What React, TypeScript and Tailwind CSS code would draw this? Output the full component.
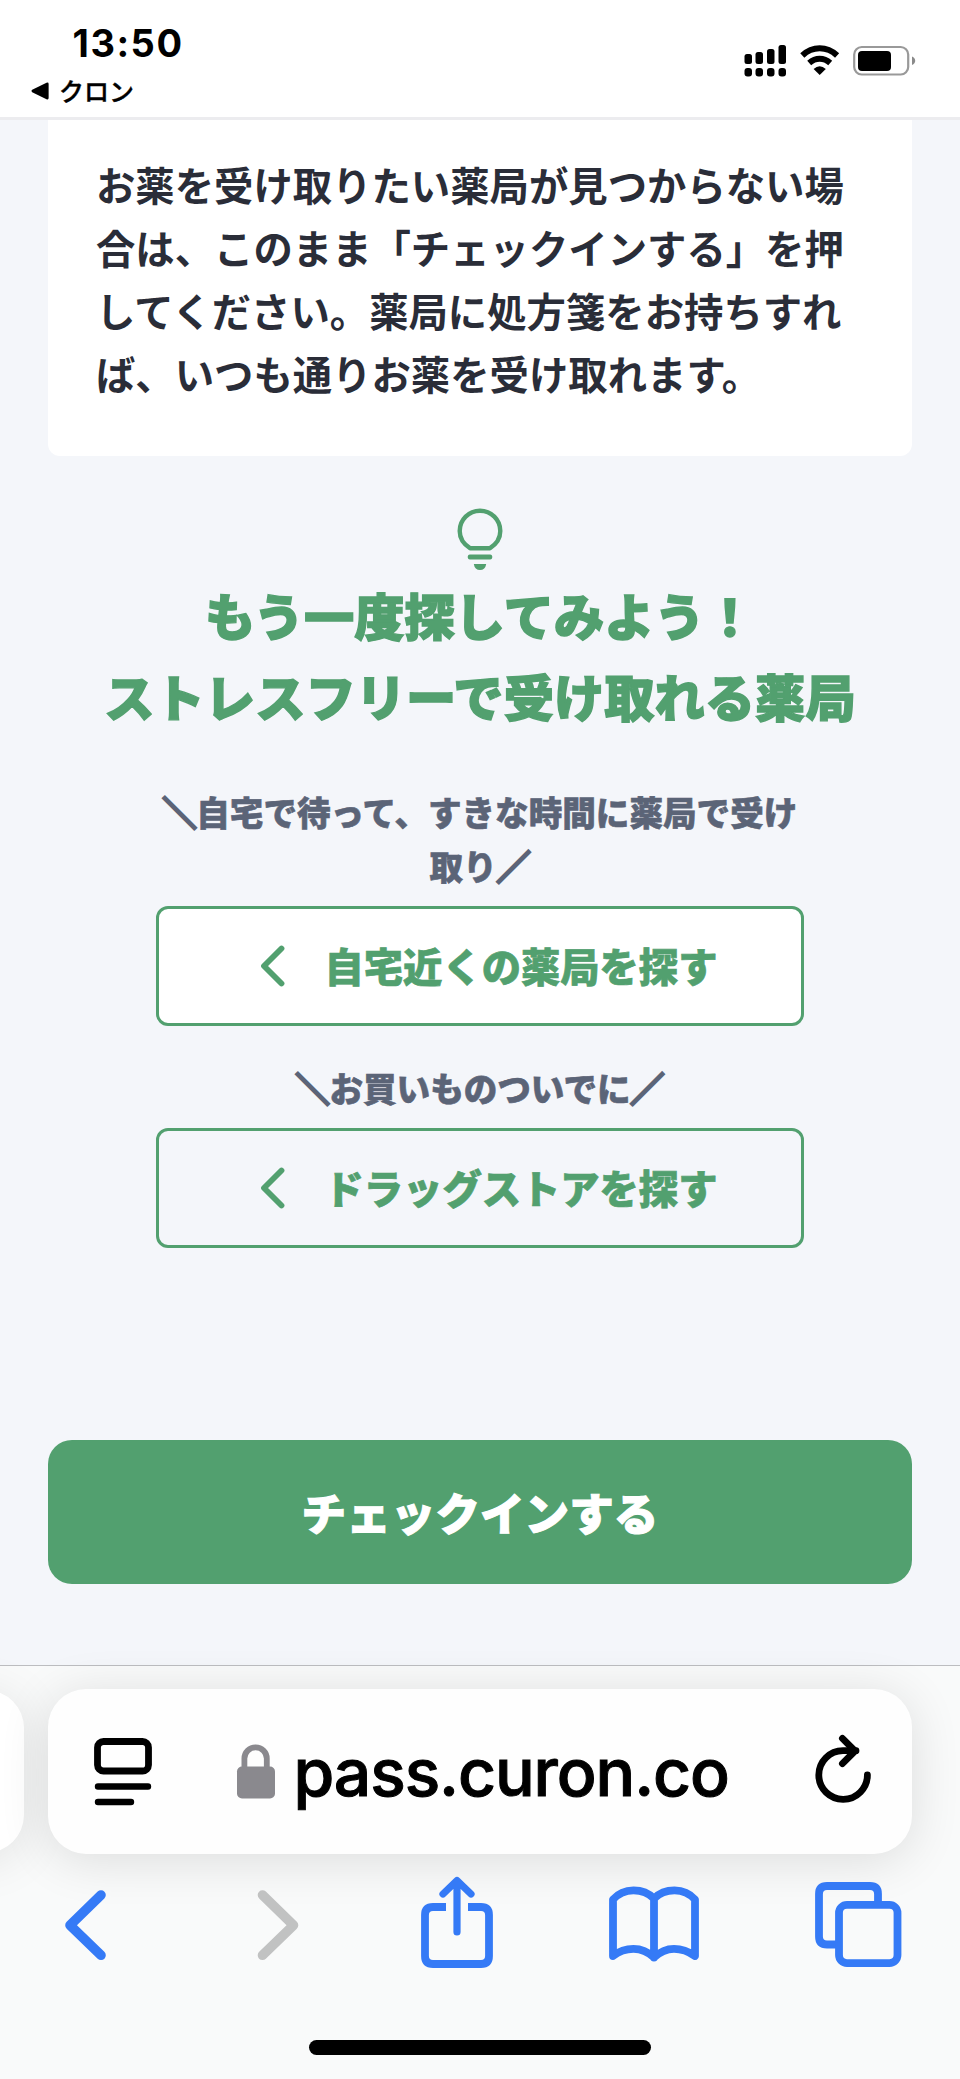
import type { ReactNode } from 'react';

const noticeLines = [
    'お薬を受け取りたい薬局が見つからない場',
    '合は、このまま「チェックインする」を押',
    'してください。薬局に処方箋をお持ちすれ',
    'ば、いつも通りお薬を受け取れます。',
];

const searchOptions = [
    {
        label: '自宅近くの薬局を探す',
        caption: ['自宅で待って、すきな時間に薬局で受け', '取り'],
        buttonClass: 'bg-white',
        captionClass: 'mb-[13px]',
    },
    {
        label: 'ドラッグストアを探す',
        caption: ['お買いものついでに'],
        buttonClass: 'bg-transparent',
        captionClass: 'mt-[35px] mb-[13px]',
    },
];

function StatusBar() {
    return (
        <header className="h-[120px] shrink-0 bg-white border-b-[3px] border-[#ececef] flex justify-between">
            <div className="pl-[31px] pt-[22px]">
                <div className="pl-[41.5px] h-[43px] leading-[43px] text-[38px] font-bold text-black font-['Inter',sans-serif] tracking-[1.5px]">
                    13:50
                </div>
                <div className="flex items-center h-[52px] gap-[10px]">
                    <svg width="18" height="18" viewBox="0 0 18 18">
                        <path d="M1.2 7.8 15.5.8Q17.6 0 17.6 2v14q0 2-2.1 1.2L1.2 10.2Q-.2 9 1.2 7.8Z" />
                    </svg>
                    <span className="text-[25px] font-medium text-black [-webkit-text-stroke:0.4px]">クロン</span>
                </div>
            </div>

            <div className="pt-[44px] pr-[43px] flex gap-[13px]">
                {/* Dual SIM signal */}
                <svg width="43" height="34" viewBox="0 0 43 34">
                    <rect x="0.5" y="10" width="7.5" height="10" rx="2.5" />
                    <rect x="11.5" y="8" width="7.5" height="12" rx="2.5" />
                    <rect x="23" y="5" width="7.5" height="15" rx="2.5" />
                    <rect x="34.5" y="1" width="7.5" height="19" rx="2.5" />
                    <rect x="0.5" y="24" width="7.5" height="8.5" rx="3" />
                    <rect x="11.5" y="24" width="7.5" height="8.5" rx="3" />
                    <rect x="23" y="24" width="7.5" height="8.5" rx="3" />
                    <rect x="34.5" y="24" width="7.5" height="8.5" rx="3" />
                </svg>
                {/* Wi-Fi */}
                <svg width="40" height="32" viewBox="0 0 40 32">
                    <path d="M2.300 11.500Q10 4.300 19.700 4.300T37.100 11.500" fill="none" stroke="#000" strokeWidth="6" />
                    <path d="M9.200 19Q14 14.800 19.700 14.800T30.200 19" fill="none" stroke="#000" strokeWidth="6" />
                    <path d="M13.600 25Q19.700 19.500 25.800 25L19.700 31Z" />
                </svg>
                {/* Battery */}
                <svg width="64" height="32" viewBox="0 0 64 32">
                    <rect x="1.2" y="3" width="54" height="27.5" rx="7.5" fill="none" stroke="#999" strokeWidth="2.2" />
                    <rect x="5" y="7" width="33" height="20" rx="4" />
                    <path d="M59 12.5q3.2 1.5 3.2 4.3T59 21Z" fill="#8a8a8a" />
                </svg>
            </div>
        </header>
    );
}

function BulbIcon() {
    return (
        <svg width="48" height="64" viewBox="0 0 48 64" className="text-[#52a06f]">
            <path
                d="M14 40.2C7.5 36 3.7 30.2 3.7 23a20.3 20.3 0 0 1 40.6 0c0 7.2-3.8 13-10.3 17.2Z"
                fill="none"
                stroke="currentColor"
                strokeWidth="4.4"
                strokeLinejoin="round"
            />
            <rect x="11.8" y="46.5" width="24.4" height="5" rx="2" fill="currentColor" />
            <path d="M17.8 56h12.4q-1 6-6.2 6t-6.2-6Z" fill="currentColor" />
        </svg>
    );
}

function Slash({ children }: { children: ReactNode }) {
    return <span className="[-webkit-text-stroke:3px]">{children}</span>;
}

function SearchButton({ children, className }: { children: ReactNode; className: string }) {
    return (
        <button
            className={`flex items-center w-[648px] h-[120px] pl-[101px] rounded-[12px] border-[3px] border-[#52a06f] text-[39.3px] font-black text-[#52a06f] ${className}`}
        >
            <svg width="26" height="42" viewBox="0 0 26 42" className="mr-[38.5px]">
                <path d="M21.5 3.5 4 21l17.500 17.5" fill="none" stroke="currentColor" strokeWidth="5.8" strokeLinecap="round" strokeLinejoin="round" />
            </svg>
            <span className="whitespace-nowrap -mt-[2px] [-webkit-text-stroke:0.7px]">{children}</span>
        </button>
    );
}

function AddressBar() {
    return (
        <div className="flex h-[165px] mt-[23px]">
            {/* Edge of the previous tab */}
            <div className="w-[100px] -ml-[76px] mr-6 my-px shrink-0 bg-white rounded-[38px] shadow-[0_6px_50px_rgba(0,0,0,0.10)]" />
            <div className="w-[864px] shrink-0 bg-[#fefefe] rounded-[38px] shadow-[0_6px_50px_rgba(0,0,0,0.12)] flex items-center pl-[45px] pr-[38.5px]">
                <svg width="60" height="70" viewBox="0 0 60 70" fill="none" stroke="#000" strokeLinecap="round">
                    <rect x="4.5" y="4.5" width="51" height="29.5" rx="6" strokeWidth="6.8" />
                    <path d="M5 49.500h50M5 65h33" strokeWidth="6.4" />
                </svg>
                <svg width="40" height="56" viewBox="0 0 40 56" className="ml-[83px] -mt-[2px]">
                    <path d="M8.4 25V15.5a11.2 11.2 0 0 1 22.4 0V25" fill="none" stroke="#8a898e" strokeWidth="5.8" />
                    <rect x="1" y="23.5" width="38" height="32" rx="5" fill="#8a898e" />
                </svg>
                <span className="ml-[17.5px] text-[66px] leading-[80px] font-medium text-black font-['Inter',sans-serif] tracking-[-1.1px] [-webkit-text-stroke:1px]">
                    pass.curon.co
                </span>
                <svg width="62" height="74" viewBox="0 0 62 74" fill="none" stroke="#000" strokeLinecap="round" strokeLinejoin="round" className="ml-auto -mt-[9px]" strokeWidth="6.8">
                    <path d="M55.4 44.8A24.3 24.3 0 1 1 31 20.7h13" />
                    <path d="M30.4 8.3 43 21 30.4 33.7" />
                </svg>
            </div>
        </div>
    );
}

function Toolbar() {
    return (
        <nav className="flex items-start pl-[63px] pt-[20px] h-[186px] text-[#357af6]">
            <svg width="44" height="74" viewBox="0 0 44 74" className="mt-[14px] mr-[149px]" fill="none" stroke="currentColor" strokeWidth="9.6" strokeLinecap="round" strokeLinejoin="round">
                <path d="M38 7 7 37.2 38 67.3" />
            </svg>
            <svg width="44" height="74" viewBox="0 0 44 74" className="mt-[14px] mr-[119px] text-[#c1c2c2]" fill="none" stroke="currentColor" strokeWidth="9.6" strokeLinecap="round" strokeLinejoin="round">
                <path d="M6.5 7 37.5 37.2 6.5 67.3" />
            </svg>
            <svg width="76" height="96" viewBox="0 0 76 96" className="mr-[112px]" fill="none" stroke="currentColor" strokeWidth="7.8">
                <path d="M27 33H14q-8 0-8 8V82q0 8 8 8H62q8 0 8-8V41q0-8-8-8H49" />
                <path d="M38 58V7M24 20 38 6.500l14 13.500" strokeWidth="7.2" strokeLinecap="round" strokeLinejoin="round" />
            </svg>
            <svg width="94" height="82" viewBox="0 0 94 82" className="mt-[9px] mr-[112px]" fill="none" stroke="currentColor" strokeWidth="7.8" strokeLinecap="round" strokeLinejoin="round">
                <path d="M47 15.5Q39 7.3 26.5 7.3T6 16.5V73Q15 65.8 26.5 65.8T47 74.5Q56 65.8 67 65.8T88 73V16.5Q80 7.3 67.5 7.3T47 15.5V74.5" />
            </svg>
            <svg width="92" height="92" viewBox="0 0 92 92" className="mt-[4px]" fill="none" stroke="currentColor" strokeWidth="7.8">
                <path d="M65 26V16q0-8-8-8H14q-8 0-8 8V58.5q0 8 8 8H26" />
                <rect x="26" y="26.8" width="58.5" height="58.3" rx="8" />
            </svg>
        </nav>
    );
}

export default function App() {
    return (
        <div className="w-[960px] h-[2079px] overflow-hidden flex flex-col bg-[#f4f6fa] font-['Noto_Sans_CJK_JP',sans-serif]">
            <StatusBar />

            <main className="h-[1545px] shrink-0 flex flex-col items-center">
                <p className="w-[864px] h-[336px] shrink-0 pt-[32px] pl-12 bg-white rounded-b-[12px] text-[39.36px] leading-[63px] font-bold text-[#2a2d38]">
                    {noticeLines.map((line) => (
                        <span key={line} className="block whitespace-nowrap">{line}</span>
                    ))}
                </p>

                <div className="mt-[52px]">
                    <BulbIcon />
                </div>
                <h1 className="mt-[2px] text-center text-[50.3px] leading-[81px] font-black text-[#52a06f] [-webkit-text-stroke:1.4px]">
                    もう一度探してみよう！
                    <br />
                    ストレスフリーで受け取れる薬局
                </h1>

                <section className="mt-[49px] flex flex-col items-center">
                    {searchOptions.map(({ label, caption, buttonClass, captionClass }) => (
                        <div key={label} className="flex flex-col items-center">
                            <div className={`text-center text-[33.6px] leading-[54px] font-black text-[#5b6477] [-webkit-text-stroke:0.6px] ${captionClass}`}>
                                {caption.map((line, i) => (
                                    <span key={line} className="block whitespace-nowrap">
                                        {i === 0 && <Slash>＼</Slash>}
                                        {line}
                                        {i === caption.length - 1 && <Slash>／</Slash>}
                                    </span>
                                ))}
                            </div>
                            <SearchButton className={buttonClass}>{label}</SearchButton>
                        </div>
                    ))}
                </section>

                <button className="mt-[192px] w-[864px] h-[144px] shrink-0 rounded-[24px] bg-[#52a06f] text-white text-[44.6px] font-black [-webkit-text-stroke:1.1px]">
                    チェックインする
                </button>
            </main>

            {/* Browser chrome */}
            <footer className="h-[414px] shrink-0 border-t border-[#bcbdc0] bg-[#f9fafa]">
                <AddressBar />
                <Toolbar />
                <div className="mx-auto w-[342px] h-[15px] rounded-full bg-black" />
            </footer>
        </div>
    );
}
